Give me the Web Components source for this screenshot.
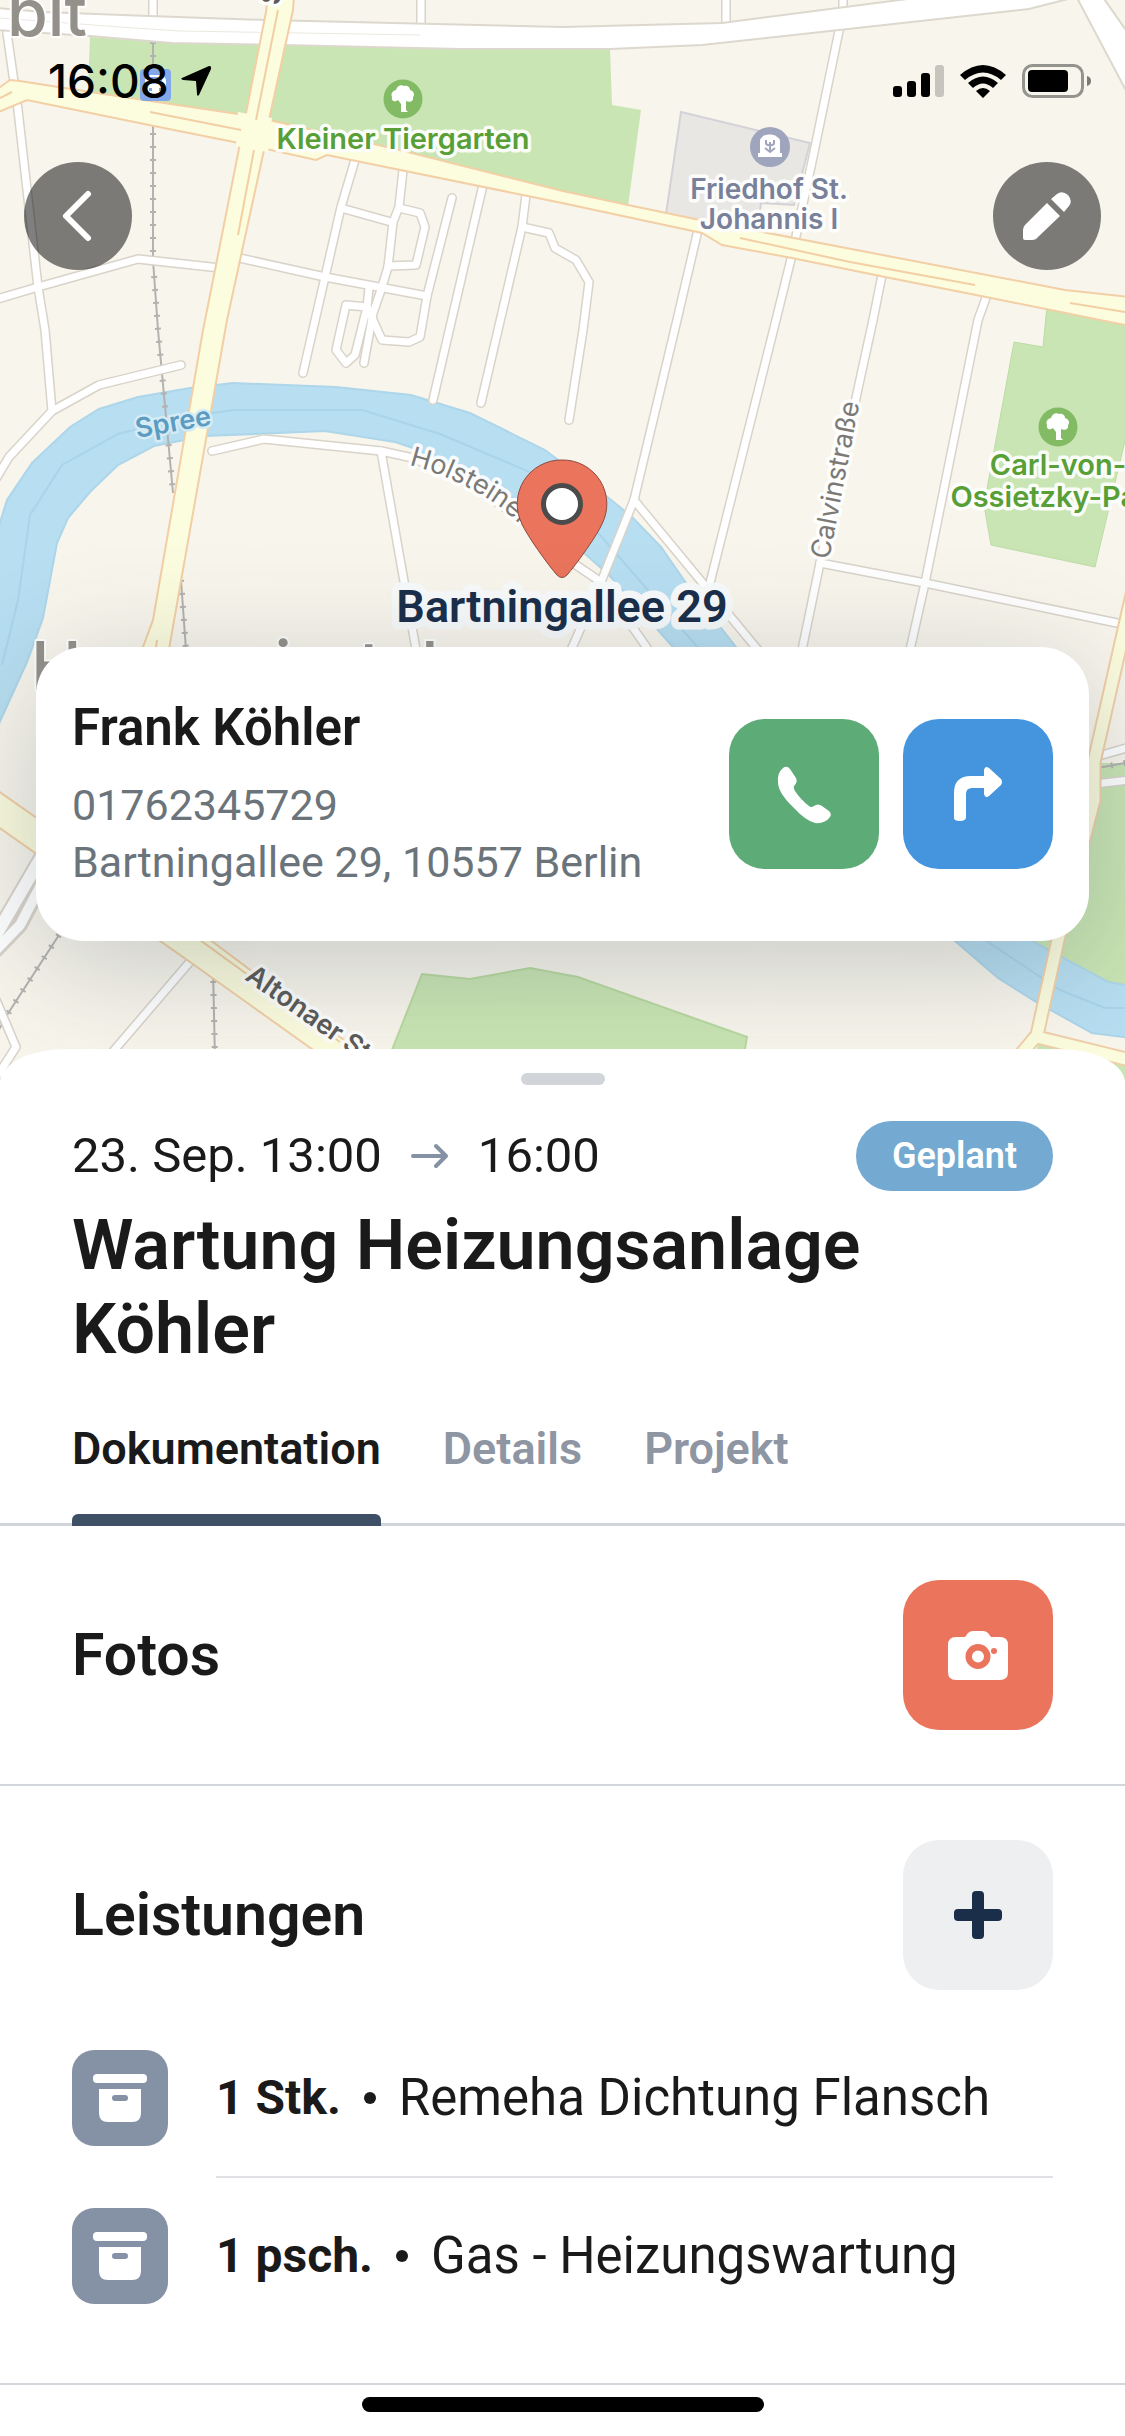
<!DOCTYPE html>
<html lang="de">
<head>
<meta charset="utf-8">
<meta name="viewport" content="width=device-width, initial-scale=1">
<title>Wartung Heizungsanlage Köhler</title>
<style>
  html { background: #fff; }
  body { margin: 0; font-family: Roboto, "Noto Sans", sans-serif; color: #1a1a1a; }
</style>
</head>
<body>
<job-screen></job-screen>

<template id="map-canvas">
  <style>
    :host { display: block; overflow: hidden; background: #f8f5ec; }
    svg { display: block; width: 100%; height: 100%; }
    text { font-family: Inter, "Noto Sans", sans-serif; paint-order: stroke; stroke-linejoin: round; stroke: #fffe; stroke-width: 7px; }
    .poi { font-weight: 600; text-anchor: middle; }
    .green { font-size: 29px; fill: #589f38; }
    .slate { font-size: 28px; fill: #78809a; }
    .street { font-size: 27px; font-weight: 400; fill: #7c7a76; }
    .main { font-size: 27px; font-weight: 600; fill: #5c5b59; }
    .river { font-size: 27px; font-weight: 600; fill: #5b9cc0; stroke: #d5ebf6; stroke-width: 5px; }
    .district { font-weight: 500; fill: #94918b; stroke-width: 4px; }
    .place { font-family: Roboto, sans-serif; font-size: 45px; font-weight: 600; fill: #1a2e4a; stroke: #f8fafb; stroke-width: 15px; text-anchor: middle; }
  </style>
  <svg viewBox="0 0 1125 1089" preserveAspectRatio="xMidYMin slice" role="img" aria-label="Karte">
    <defs>
      <g id="streets">
        <path d="M7 33 18 110 38 287 45 330 52 411"/>
        <path d="M-6 300 38 287 138 259 220 268"/>
        <path d="M235 257 325 277 427 296"/>
        <path d="M181 365 99 385 52 411 9 457-6 482"/>
        <path d="M212 451 264 439 381 451 413 458 470 484 530 525 576 565 601 582 652 655"/>
        <path d="M381 451 417 655"/>
        <path d="M355 160 341 207 325 277 303 373"/>
        <path d="M341 208 391 222"/>
        <path d="M403 170 399 207 393 222 388 267 381 290 373 313 364 363"/>
        <path d="M399 208 420 213 425 227 416 265 388 266"/>
        <path d="M452 198 427 296 420 337 409 342 382 340 373 320 367 307 369 288"/>
        <path d="M367 307 346 305 336 350 346 363 355 355 367 307"/>
        <path d="M483 185 433 400"/>
        <path d="M526 195 522 227 481 403"/>
        <path d="M522 227 549 233 555 248 576 260 589 282 583 330 569 420"/>
        <path d="M153-5V22M421-5V32M726-5V32M843-5V16"/>
        <path d="M840 26 813 157 792 255 776 320 709 587"/>
        <path d="M698 230 677 320 634 500 601 582 571 650"/>
        <path d="M634 500 758 650"/>
        <path d="M882 275 873 320 820 563 802 650"/>
        <path d="M987 295 978 320 925 583 910 650"/>
        <path d="M820 563 925 583 1117 623"/>
        <path d="M194 957 110 1055"/>
        <path d="M-4 1000 16 1047-4 1078"/>
        <path d="M1095 757 1130 747M1095 784 1130 780"/>
      </g>
      <g id="tree">
        <circle r="19.500" fill="#82bb64"/>
        <path fill="#fff" d="M-2 13V5L-5 1C-9 4-12 1-11-2-13-6-9-9-7-9-6-13-2-15 1-13 5-14 7-11 7-9 11-8 12-4 10-2 11 2 7 4 3 2V11L5 13Z"/>
      </g>
      <path id="holsteiner" d="M409 465C440 472 478 491 500 507 530 531 550 556 575 583"/>
    </defs>

    <path fill="#c9e5b3" d="M90 37 172 43 284 45 610 49 612 105 641 110 628 206 269 125 88 92Z"/>
    <path fill="#e8e7e3" stroke="#d3d2d8" stroke-width="2" d="M681 112 810 143 794 205 761 203 757 232 666 214Z"/>
    <path fill="#c9e5b3" stroke="#bcdca6" stroke-width="1" d="M1047 306 1043 347 1014 342 984 505 991 545 1095 567 1130 420V320Z"/>
    <path fill="#c9e5b3" d="M1096 763H1125V986L1108 984 1020 935 1060 890Z"/>
    <path fill="#c9e5b3" stroke="#b8d9a0" stroke-width="2" d="M388 1060 422 974 470 979 530 968 578 977 747 1037 743 1060Z"/>
    <path fill="#c9e5b3" d="M1038 1044 1125 1065V1089H1030Z"/>

    <path fill="#b7def1" stroke="#aed6ea" stroke-width="2" d="M-4 535 7 500 32 463 70 427 99 409 138 397 190 388 233 383 336 387 411 395 470 413 545 450 605 495 632 517 661 547 686 583 736 647 850 790 1032 941 1108 982 1130 986V1038L1092 1033 1036 1002 998 978 955 941 780 800 673 647 609 575 584 553 517 500 413 448 395 442 325 431 205 436 154 446 118 465 90 492 68 518 57 543 43 618 27 662-4 730Z"/>
    <path fill="none" stroke="#a9d4ea" stroke-width="2" d="M2 665 18 600 30 515 62 465 118 434 185 417 233 410H362L440 434 530 472 600 535 700 650M985 940 1060 990 1105 1008H1125"/>

    <g fill="none" stroke="#b3b2af" stroke-width="2">
      <path d="M153 42V260L158 330 173 493M181 580 186 650M59 935 7 1015-4 1035M213 968 215 1060M1098 768 1130 762"/>
      <path stroke-width="6" stroke-dasharray="2 11" d="M153 42V260L158 330 173 493M181 580 186 650M59 935 7 1015-4 1035M213 968 215 1060M1098 768 1130 762"/>
    </g>

    <g fill="none" stroke-linejoin="round" stroke-linecap="round">
      <use href="#streets" stroke="#d9d3ca" stroke-width="10"/>
      <path stroke="#d9d3ca" stroke-width="16" d="M42 856-4 935M42 883 20 925-4 950"/>
      <use href="#streets" stroke="#fff" stroke-width="7"/>
      <path stroke="#fff" stroke-width="12" d="M42 856-4 935"/>
      <path stroke="#fff" stroke-width="10" d="M42 883 20 925-4 950"/>
    </g>

    <path fill="#fff" stroke="#ddd8ce" stroke-width="2" d="M-4 8 43 12 149 16 266 20 563 27 722 23 907-1H1068L1029 9 702 45 610 49H460L284 45 172 43 90 36-4 30Z"/>
    <path fill="#fff" stroke="#ddd8ce" stroke-width="2" d="M1076-4 1130 98V36L1102-4Z"/>
    <path fill="none" stroke="#ece8e0" stroke-width="1" d="M0 18 120 27 180 31 420 35"/>

    <g fill="#fcfcde" stroke="#f2cfa5" stroke-width="2">
      <path d="M-4 90 10 80 20 81 90 92 245 115 269 120 400 150 563 191 628 205 700 220 1065 290 1130 297V326L986 297 885 277 792 258 722 245 702 233 562 203 327 155 316 160 239 143 149 125 27 100-4 113Z"/>
      <path d="M268-4 266 12 215 270 203 330 153 620 140 655H168L227 320 264 150 269 120 293 10 294-4Z"/>
      <path d="M-6 788 201 933 360 1052 330 1062 190 962-6 824Z"/>
    </g>
    <path fill="#fcfcde" d="M238 112 272 118 268 152 236 146Z"/>
    <g fill="none" stroke="#f2cfa5" stroke-width="2">
      <path d="M0 98 12 92M150 112 241 130M278 10 256 120M254 150 238 235M740 238 850 262 975 285M1070 303 1125 312M190 930 200 940 340 1042"/>
      <path d="M157 640 156 647"/>
    </g>
    <g fill="none" stroke-linejoin="round">
      <path stroke="#f0d0aa" stroke-width="15" d="M1133 590 1094 762V800L1058 940 1037 1035 1012 1065M1037 1037 1130 1060"/>
      <path stroke="#fcfcde" stroke-width="11" d="M1133 590 1094 762V800L1058 940 1037 1035 1012 1065M1037 1037 1130 1060"/>
    </g>

    <rect x="140" y="69" width="31" height="32" rx="4" fill="#82a8ea"/>
    <rect x="145" y="75" width="21" height="20" rx="6" fill="#fff"/>
    <path fill="#82a8ea" d="M149 77H162V84H149ZM149 88H152V91H149ZM159 88H162V91H159Z"/>

    <use href="#tree" x="403" y="99"/>
    <use href="#tree" x="1058" y="427"/>
    <circle cx="770" cy="147" r="20" fill="#9fa5bd"/>
    <path fill="#fff" d="M760 153V141C760 138 762 138 763 136 767 134 773 134 776 136 778 138 780 138 780 141V153H782V157H758V153Z"/>
    <path fill="none" stroke="#9fa5bd" stroke-width="2" d="M770 153V142M766 140V143C766 146 774 146 774 143V140M765 148 770 152 775 148"/>

    <text class="district" font-size="66" x="7" y="36">bit</text>
    <text class="district" font-size="68" x="31" y="690">Hansaviertel</text>
    <text class="poi green" x="403" y="149">Kleiner Tiergarten</text>
    <text class="poi slate" x="769" y="199">Friedhof St.</text>
    <text class="poi slate" x="769" y="229">Johannis I</text>
    <text class="poi green" x="1058" y="475">Carl-von-</text>
    <text class="poi green" x="1058" y="507">Ossietzky-Park</text>
    <text class="river" transform="translate(137 438) rotate(-10)">Spree</text>
    <text class="street"><textPath href="#holsteiner">Holsteiner</textPath></text>
    <text class="street" transform="translate(829 560) rotate(-79)">Calvinstraße</text>
    <text class="main" transform="translate(244 979) rotate(35)">Altonaer Straße</text>
    <text class="main" transform="translate(279 6) rotate(-80)">Stromstraße</text>

    <path fill="#ea745c" stroke="#8d4a3e" stroke-width="1" d="M562 460A44 44 0 0 1 602 524C598 534 576 565 567 575Q562 580 557 575C548 565 526 534 522 524A44 44 0 0 1 562 460Z"/>
    <circle cx="562" cy="504" r="18.500" fill="#fff" stroke="#4b4b4b" stroke-width="5"/>
    <text class="place" x="562" y="622">Bartningallee 29</text>
  </svg>
</template>

<template id="status-bar">
  <style>
    :host { display: flex; justify-content: space-between; align-items: center; padding: 54px 33px 54px 48px; font: 500 46px/54px Inter, "Noto Sans", sans-serif; color: #000; }
    .side { display: flex; align-items: center; gap: 12px; }
    .signals { gap: 16px; }
    svg { display: block; }
  </style>
  <div class="side">
    <time>16:08</time>
    <svg width="30" height="30" viewBox="0 0 30 30"><path d="M1 12 28 0Q31 0 30 3L18 29Q16 31 16 28L15 15 2 14Q-1 13 1 12Z"/></svg>
  </div>
  <div class="side signals">
    <svg width="51" height="32" viewBox="0 0 51 32"><rect y="21" width="9" height="11" rx="3"/><rect x="14" y="16" width="9" height="16" rx="3"/><rect x="28" y="8" width="9" height="24" rx="3"/><rect x="42" width="9" height="32" rx="3" opacity=".2"/></svg>
    <svg width="46" height="33" viewBox="0 0 46 33"><path d="M0 10Q23-10 46 10L41 15Q23 0 5 15ZM8 18Q23 5 38 18L33 23Q23 14 13 23ZM16 26Q23 20 30 26L23 33Z"/></svg>
    <svg width="70" height="34" viewBox="0 0 70 34"><rect x="1.500" y="1.500" width="59" height="31" rx="9" fill="none" stroke="#000" stroke-opacity=".4" stroke-width="3"/><rect x="6" y="6" width="40" height="22" rx="4"/><path opacity=".5" d="M65 12Q69 13 69 17 69 21 65 22Z"/></svg>
  </div>
</template>

<template id="app-icon">
  <style>
    :host { display: block; }
    svg { display: block; fill: currentColor; }
  </style>
</template>

<template id="icon-button">
  <style>
    :host { display: block; }
    button { display: flex; align-items: center; justify-content: center; width: 150px; height: 150px; margin: 0; padding: 0; border: 0; border-radius: 36px; background: var(--tone); color: var(--ink, #fff); font: inherit; }
    :host([round]) button { width: 108px; height: 108px; border-radius: 50%; }
  </style>
  <button type="button"><slot></slot></button>
</template>

<template id="contact-card">
  <style>
    :host { display: flex; align-items: center; justify-content: space-between; gap: 24px; padding: 50px 36px; border-radius: 48px; background: #fff; box-shadow: 0 24px 120px rgba(50, 70, 80, .26); }
    h2 { margin: 0 0 18px; font-size: 51px; line-height: 62px; font-weight: 600; }
    p { margin: 0; font-size: 43px; line-height: 57px; color: #6b747b; }
    .actions { display: flex; gap: 24px; }
  </style>
  <div>
    <h2><slot name="name"></slot></h2>
    <p><slot name="phone"></slot></p>
    <p><slot name="address"></slot></p>
  </div>
  <div class="actions"><slot></slot></div>
</template>

<template id="tab-bar">
  <style>
    :host { display: flex; gap: 62px; padding: 0 72px; box-shadow: inset 0 -3px #d1d4db; }
    .tab { display: flex; flex-direction: column; }
    button { margin: 0; padding: 51px 0 38px; border: 0; background: none; font: 600 45px/54px Roboto, sans-serif; color: #8e95a3; }
    button[aria-selected="true"] { color: #1a1a1a; }
    i { height: 12px; border-radius: 6px 6px 0 0; }
    .on i { background: #3d5065; }
  </style>
  <div class="tab on"><button type="button" role="tab" aria-selected="true">Dokumentation</button><i></i></div>
  <div class="tab"><button type="button" role="tab" aria-selected="false">Details</button><i></i></div>
  <div class="tab"><button type="button" role="tab" aria-selected="false">Projekt</button><i></i></div>
</template>

<template id="job-section">
  <style>
    :host { display: block; padding: 54px 72px; border-bottom: 2px solid #d3d6db; }
    :host([flush]) { padding-bottom: 49px; }
    header { display: flex; align-items: center; justify-content: space-between; }
    h2 { margin: 0; font-size: 59px; line-height: 66px; font-weight: 600; }
  </style>
  <header><h2><slot name="title"></slot></h2><slot name="action"></slot></header>
  <slot></slot>
</template>

<template id="service-item">
  <style>
    :host { display: flex; gap: 48px; font-size: 51px; line-height: 60px; }
    .tile { display: flex; align-items: center; justify-content: center; flex: none; width: 96px; height: 96px; border-radius: 22px; background: #8592a5; color: #fff; }
    .line { flex: 1; display: flex; align-items: center; gap: 23px; height: 96px; }
    .body { flex: 1; padding-bottom: 30px; border-bottom: 2px solid #dfe1e4; margin-bottom: 30px; }
    :host(:last-of-type) .body { border: 0; margin: 0; }
    b { font-size: 48px; font-weight: 700; }
    i { width: 12px; height: 12px; border-radius: 50%; background: #1a1a1a; }
  </style>
  <div class="tile"><app-icon name="archive"></app-icon></div>
  <div class="body"><div class="line"><b><slot name="amount"></slot></b><i></i><span><slot></slot></span></div></div>
</template>

<template id="job-sheet">
  <style>
    :host { display: block; position: relative; padding-top: 24px; background: #fff; border-radius: 66px 66px 0 0 / 34px 34px 0 0; }
    .handle { width: 84px; height: 12px; margin: 0 auto; border-radius: 6px; background: #d1d5d9; }
    .head { padding: 36px 72px 0; }
    .when { display: flex; align-items: center; justify-content: space-between; }
    .range { display: flex; align-items: center; gap: 29px; font-size: 49px; line-height: 60px; }
    .range app-icon { color: #8592a5; }
    .badge { padding: 0 36px; border-radius: 35px; background: #74aad2; color: #fff; font-size: 36px; line-height: 70px; font-weight: 600; }
    h1 { margin: 12px 0 0; font-size: 70px; line-height: 84px; font-weight: 600; max-width: 880px; }
    .home { display: flex; justify-content: center; padding: 12px 0 24px; }
    .home i { width: 402px; height: 15px; border-radius: 8px; background: #000; }
    .list { padding-top: 60px; }
    .photo { --tone: #ea745c; }
    .add { --tone: #edeff1; --ink: #1a2e4a; }
  </style>
  <div class="handle"></div>
  <div class="head">
    <div class="when">
      <div class="range"><time>23. Sep. 13:00</time><app-icon name="arrow"></app-icon><time>16:00</time></div>
      <span class="badge">Geplant</span>
    </div>
    <h1>Wartung Heizungsanlage Köhler</h1>
  </div>
  <tab-bar></tab-bar>
  <job-section>
    <span slot="title">Fotos</span>
    <icon-button slot="action" class="photo" label="Foto aufnehmen"><app-icon name="camera"></app-icon></icon-button>
  </job-section>
  <job-section flush>
    <span slot="title">Leistungen</span>
    <icon-button slot="action" class="add" label="Leistung hinzufügen"><app-icon name="plus"></app-icon></icon-button>
    <div class="list">
      <service-item><span slot="amount">1 Stk.</span>Remeha Dichtung Flansch</service-item>
      <service-item><span slot="amount">1 psch.</span>Gas - Heizungswartung</service-item>
    </div>
  </job-section>
  <div class="home"><i></i></div>
</template>

<template id="job-screen">
  <style>
    :host { display: block; }
    .hero { position: relative; padding-bottom: 148px; overflow: hidden; }
    map-canvas { position: absolute; inset: 0; }
    status-bar, nav, contact-card { position: relative; }
    nav { display: flex; justify-content: space-between; padding: 0 24px; }
    nav icon-button { --tone: rgba(0, 0, 0, .5); }
    contact-card { margin: 377px 36px 0; }
    job-sheet { margin-top: -40px; }
    .call { --tone: #5dab76; }
    .route { --tone: #4595de; }
  </style>
  <div class="hero">
    <map-canvas></map-canvas>
    <status-bar></status-bar>
    <nav>
      <icon-button round label="Zurück"><app-icon name="back"></app-icon></icon-button>
      <icon-button round label="Bearbeiten"><app-icon name="pencil"></app-icon></icon-button>
    </nav>
    <contact-card>
      <span slot="name">Frank Köhler</span>
      <span slot="phone">01762345729</span>
      <span slot="address">Bartningallee 29, 10557 Berlin</span>
      <icon-button class="call" label="Anrufen"><app-icon name="phone"></app-icon></icon-button>
      <icon-button class="route" label="Route"><app-icon name="route"></app-icon></icon-button>
    </contact-card>
  </div>
  <job-sheet></job-sheet>
</template>

<script>
  const icons = {
    back: [54, 54, '<path d="M37 5 15 27 37 49" fill="none" stroke="currentColor" stroke-width="6" stroke-linecap="round" stroke-linejoin="round"/>'],
    pencil: [50, 50, '<path d="M25 12 38 25 16 46Q14 49 10 49H3Q1 49 1 47V39Q1 36 3 34ZM29 8 35 3Q40-1 46 4 51 10 47 15L42 21Z"/>'],
    phone: [60, 60, '<path d="M9 4Q13 1 16 5L22 14Q24 18 20 22 19 24 21 27 27 36 35 42 37 44 40 42 44 39 48 42L55 47Q58 50 56 53 51 60 41 59 32 57 20 44 4 29 4 18 3 9 9 4Z"/>'],
    route: [60, 60, '<path d="M6 54V29Q6 12 23 12H36V6Q37 1 41 4L53 15Q55 18 53 21L41 32Q37 35 36 30V24H24Q18 24 18 30V54Q17 57 12 57 6 57 6 54Z"/>'],
    camera: [60, 50, '<path fill-rule="evenodd" d="M8 7H17L20 3Q22 1 25 1H35Q38 1 40 3L43 7H52Q60 7 60 15V42Q60 50 52 50H8Q0 50 0 42V15Q0 7 8 7ZM30 14A12.500 12.500 0 1 0 30 39 12.500 12.500 0 1 0 30 14ZM30 20.500A6 6 0 1 1 30 32.500 6 6 0 1 1 30 20.500ZM46 18A3 3 0 1 0 46 24 3 3 0 1 0 46 18Z"/>'],
    plus: [48, 48, '<rect x="18" width="12" height="48" rx="4"/><rect y="18" width="48" height="12" rx="4"/>'],
    archive: [54, 50, '<rect y="1" width="54" height="9" rx="4"/><path fill-rule="evenodd" d="M6 16H48V40Q48 49 39 49H15Q6 49 6 40ZM22 22Q19 22 19 25 19 28 22 28H32Q35 28 35 25 35 22 32 22Z"/>'],
    arrow: [38, 26, '<path d="M2 13H35M25 3 35 13 25 23" fill="none" stroke="currentColor" stroke-width="4" stroke-linecap="round" stroke-linejoin="round"/>']
  };

  class TemplateElement extends HTMLElement {
    constructor() {
      super();
      const source = document.getElementById(this.localName);
      this.attachShadow({ mode: 'open' }).append(source.content.cloneNode(true));
    }
  }

  class AppIcon extends TemplateElement {
    connectedCallback() {
      if (this.shadowRoot.querySelector('svg')) return;
      const [w, h, shape] = icons[this.getAttribute('name')];
      this.shadowRoot.innerHTML += `<svg width="${w}" height="${h}" viewBox="0 0 ${w} ${h}" aria-hidden="true">${shape}</svg>`;
    }
  }

  class IconButton extends TemplateElement {
    connectedCallback() {
      this.shadowRoot.querySelector('button').setAttribute('aria-label', this.getAttribute('label'));
    }
  }

  customElements.define('app-icon', AppIcon);
  customElements.define('icon-button', IconButton);
  for (const tag of ['map-canvas', 'status-bar', 'contact-card', 'tab-bar', 'job-section', 'service-item', 'job-sheet', 'job-screen']) {
    customElements.define(tag, class extends TemplateElement {});
  }
</script>
</body>
</html>
